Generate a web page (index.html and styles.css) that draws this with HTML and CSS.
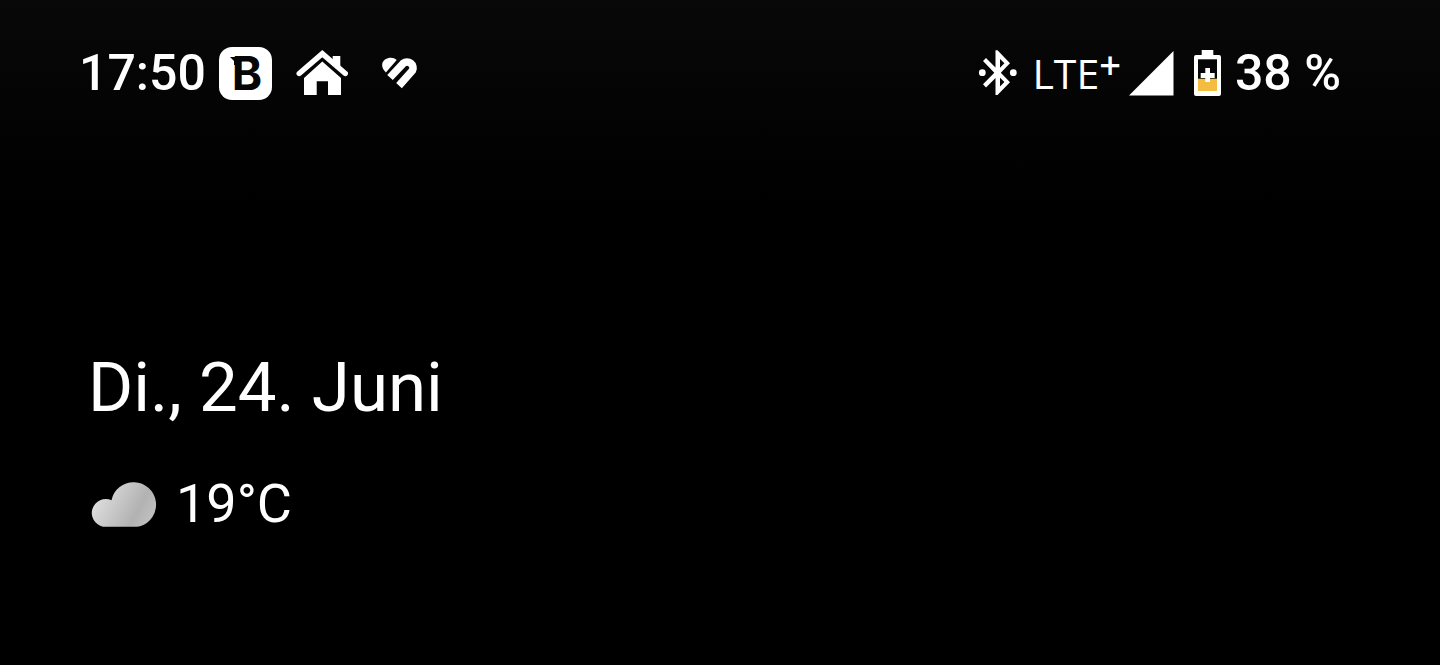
FILE: index.html
```html
<!DOCTYPE html>
<html lang="de">
<head>
<meta charset="utf-8">
<meta name="viewport" content="width=device-width, initial-scale=1">
<title>Startbildschirm</title>
<link rel="stylesheet" href="styles.css">
</head>
<body>
<header class="status">
  <div class="status-left">
    <time class="clock">17:50</time>
    <span class="badge"><svg class="flag" width="11" height="8" viewBox="0 0 11 8" aria-hidden="true"><path d="M0 0H11V8H4V4Z"/></svg>B</span>
    <svg class="house" width="52" height="46" viewBox="0 0 52 46" aria-hidden="true">
      <path d="M36.7 6H44.3V18L36.7 12Z" fill="#fff"/>
      <path d="M3.2 23.5 26.3 3.6 49.3 23.5" fill="none" stroke="#fff" stroke-width="5.4" stroke-linecap="round"/>
      <path d="M26.3 11.5 45 28V45H32V31.3H20.7V45H8V28Z" fill="#fff"/>
    </svg>
    <svg class="heart" width="36" height="32" viewBox="0 0 36 32" aria-hidden="true">
      <path d="M14.7 3 3.9 15.4C-1 11-1 5.500 3 2.500 7 0 11.500 0 14.700 3Z" fill="#fff"/>
      <path d="M8 20.500 21.300 6.300A6 6 0 0 1 30.500 13.500L17 28.600" fill="none" stroke="#fff" stroke-width="7.600"/>
    </svg>
  </div>
  <div class="status-right">
    <svg width="40" height="46" viewBox="0 0 40 46" aria-hidden="true">
      <circle cx="4.300" cy="22.700" r="3.400" fill="#fff"/><circle cx="35.300" cy="22.700" r="3.400" fill="#fff"/>
      <path fill-rule="evenodd" d="M17.500.3H19.500L32 13.200 22.800 22.700 32 32.200 19.500 45H17.500V28L8 37.500 5 34.300 16.300 22.700 5 11 8 8 17.500 17.500ZM22 9V17.700L26.400 13.300ZM22 27.700V36.400L26.400 32.100Z" fill="#fff"/>
    </svg>
    <span class="network">LTE<sup class="plus">+</sup></span>
    <svg class="signal" width="45" height="45" viewBox="0 0 45 45" aria-hidden="true"><path d="M0 44.500 44.500 0V44.500Z" fill="#fff"/></svg>
    <svg class="battery" width="27" height="46" viewBox="0 0 27 46" aria-hidden="true">
      <path d="M7.700 0H19.300V5H25Q27 5 27 7V44Q27 46 25 46H2Q0 46 0 44V7Q0 5 2 5H7.700Z" fill="#fff"/>
      <path d="M4 9.300H23V29H4Z" fill="#060606"/>
      <path d="M4 28.700H23V41H4Z" fill="#f2bd42"/>
      <path d="M11.300 18H16V23H20.700V28H16V32H11.300V28H6.700V23H11.300Z" fill="#fff"/>
    </svg>
    <span class="percent">38 %</span>
  </div>
</header>
<main class="glance">
  <h1 class="date">Di., 24. Juni</h1>
  <div class="weather">
    <svg width="69" height="45" viewBox="0 0 69 45" aria-hidden="true">
      <defs><linearGradient id="cloud" gradientUnits="userSpaceOnUse" x1="8" y1="16" x2="60" y2="44">
        <stop offset="0" stop-color="#dedede"/><stop offset=".72" stop-color="#b2b2b2"/><stop offset="1" stop-color="#c0c0c0"/>
      </linearGradient></defs>
      <path d="M15 44.700A14 14 0 1 1 23.500 18.200 22.500 22.500 0 1 1 52 44.200L49 44.700Z" fill="url(#cloud)"/>
    </svg>
    <span class="temperature">19°C</span>
  </div>
</main>
</body>
</html>
```
FILE: styles.css
```css
body {
  margin: 0;
  min-height: 100vh;
  background: linear-gradient(#080808, #000 200px) #000;
  color: #fff;
  font-family: Roboto, "Liberation Sans", sans-serif;
}

.status {
  display: flex;
  justify-content: space-between;
  padding: 44px 99px 0 79px;
}

.status-left,
.status-right {
  display: flex;
  align-items: center;
  height: 58px;
}

.clock,
.percent {
  font-size: 50px;
  font-weight: 500;
  line-height: 58px;
}

.badge {
  position: relative;
  box-sizing: border-box;
  width: 53px;
  height: 53px;
  margin-left: 13px;
  padding-left: 3px;
  border-radius: 13px;
  background: #fff;
  color: #060606;
  font-family: Inter, sans-serif;
  font-size: 46px;
  font-weight: 700;
  line-height: 53px;
  text-align: center;
}

.flag {
  position: absolute;
  top: 10px;
  left: 11px;
  fill: #060606;
}

.house {
  margin-left: 24px;
}

.heart {
  margin-left: 34px;
}

.network {
  margin-left: 14px;
  font-family: "Open Sans", sans-serif;
  font-size: 41px;
  line-height: 58px;
}

.plus {
  font-size: 38px;
  font-weight: 600;
  line-height: 0;
  vertical-align: 10px;
}

.signal {
  margin-left: 8px;
}

.battery {
  margin-left: 20px;
}

.percent {
  margin-left: 14px;
}

.glance {
  padding: 246px 88px 0;
}

.date {
  margin: 0;
  font-size: 69px;
  font-weight: 400;
  line-height: 80px;
}

.weather {
  display: flex;
  align-items: center;
  gap: 19px;
  margin-top: 44px;
}

.temperature {
  font-size: 54px;
  line-height: 64px;
}
```
